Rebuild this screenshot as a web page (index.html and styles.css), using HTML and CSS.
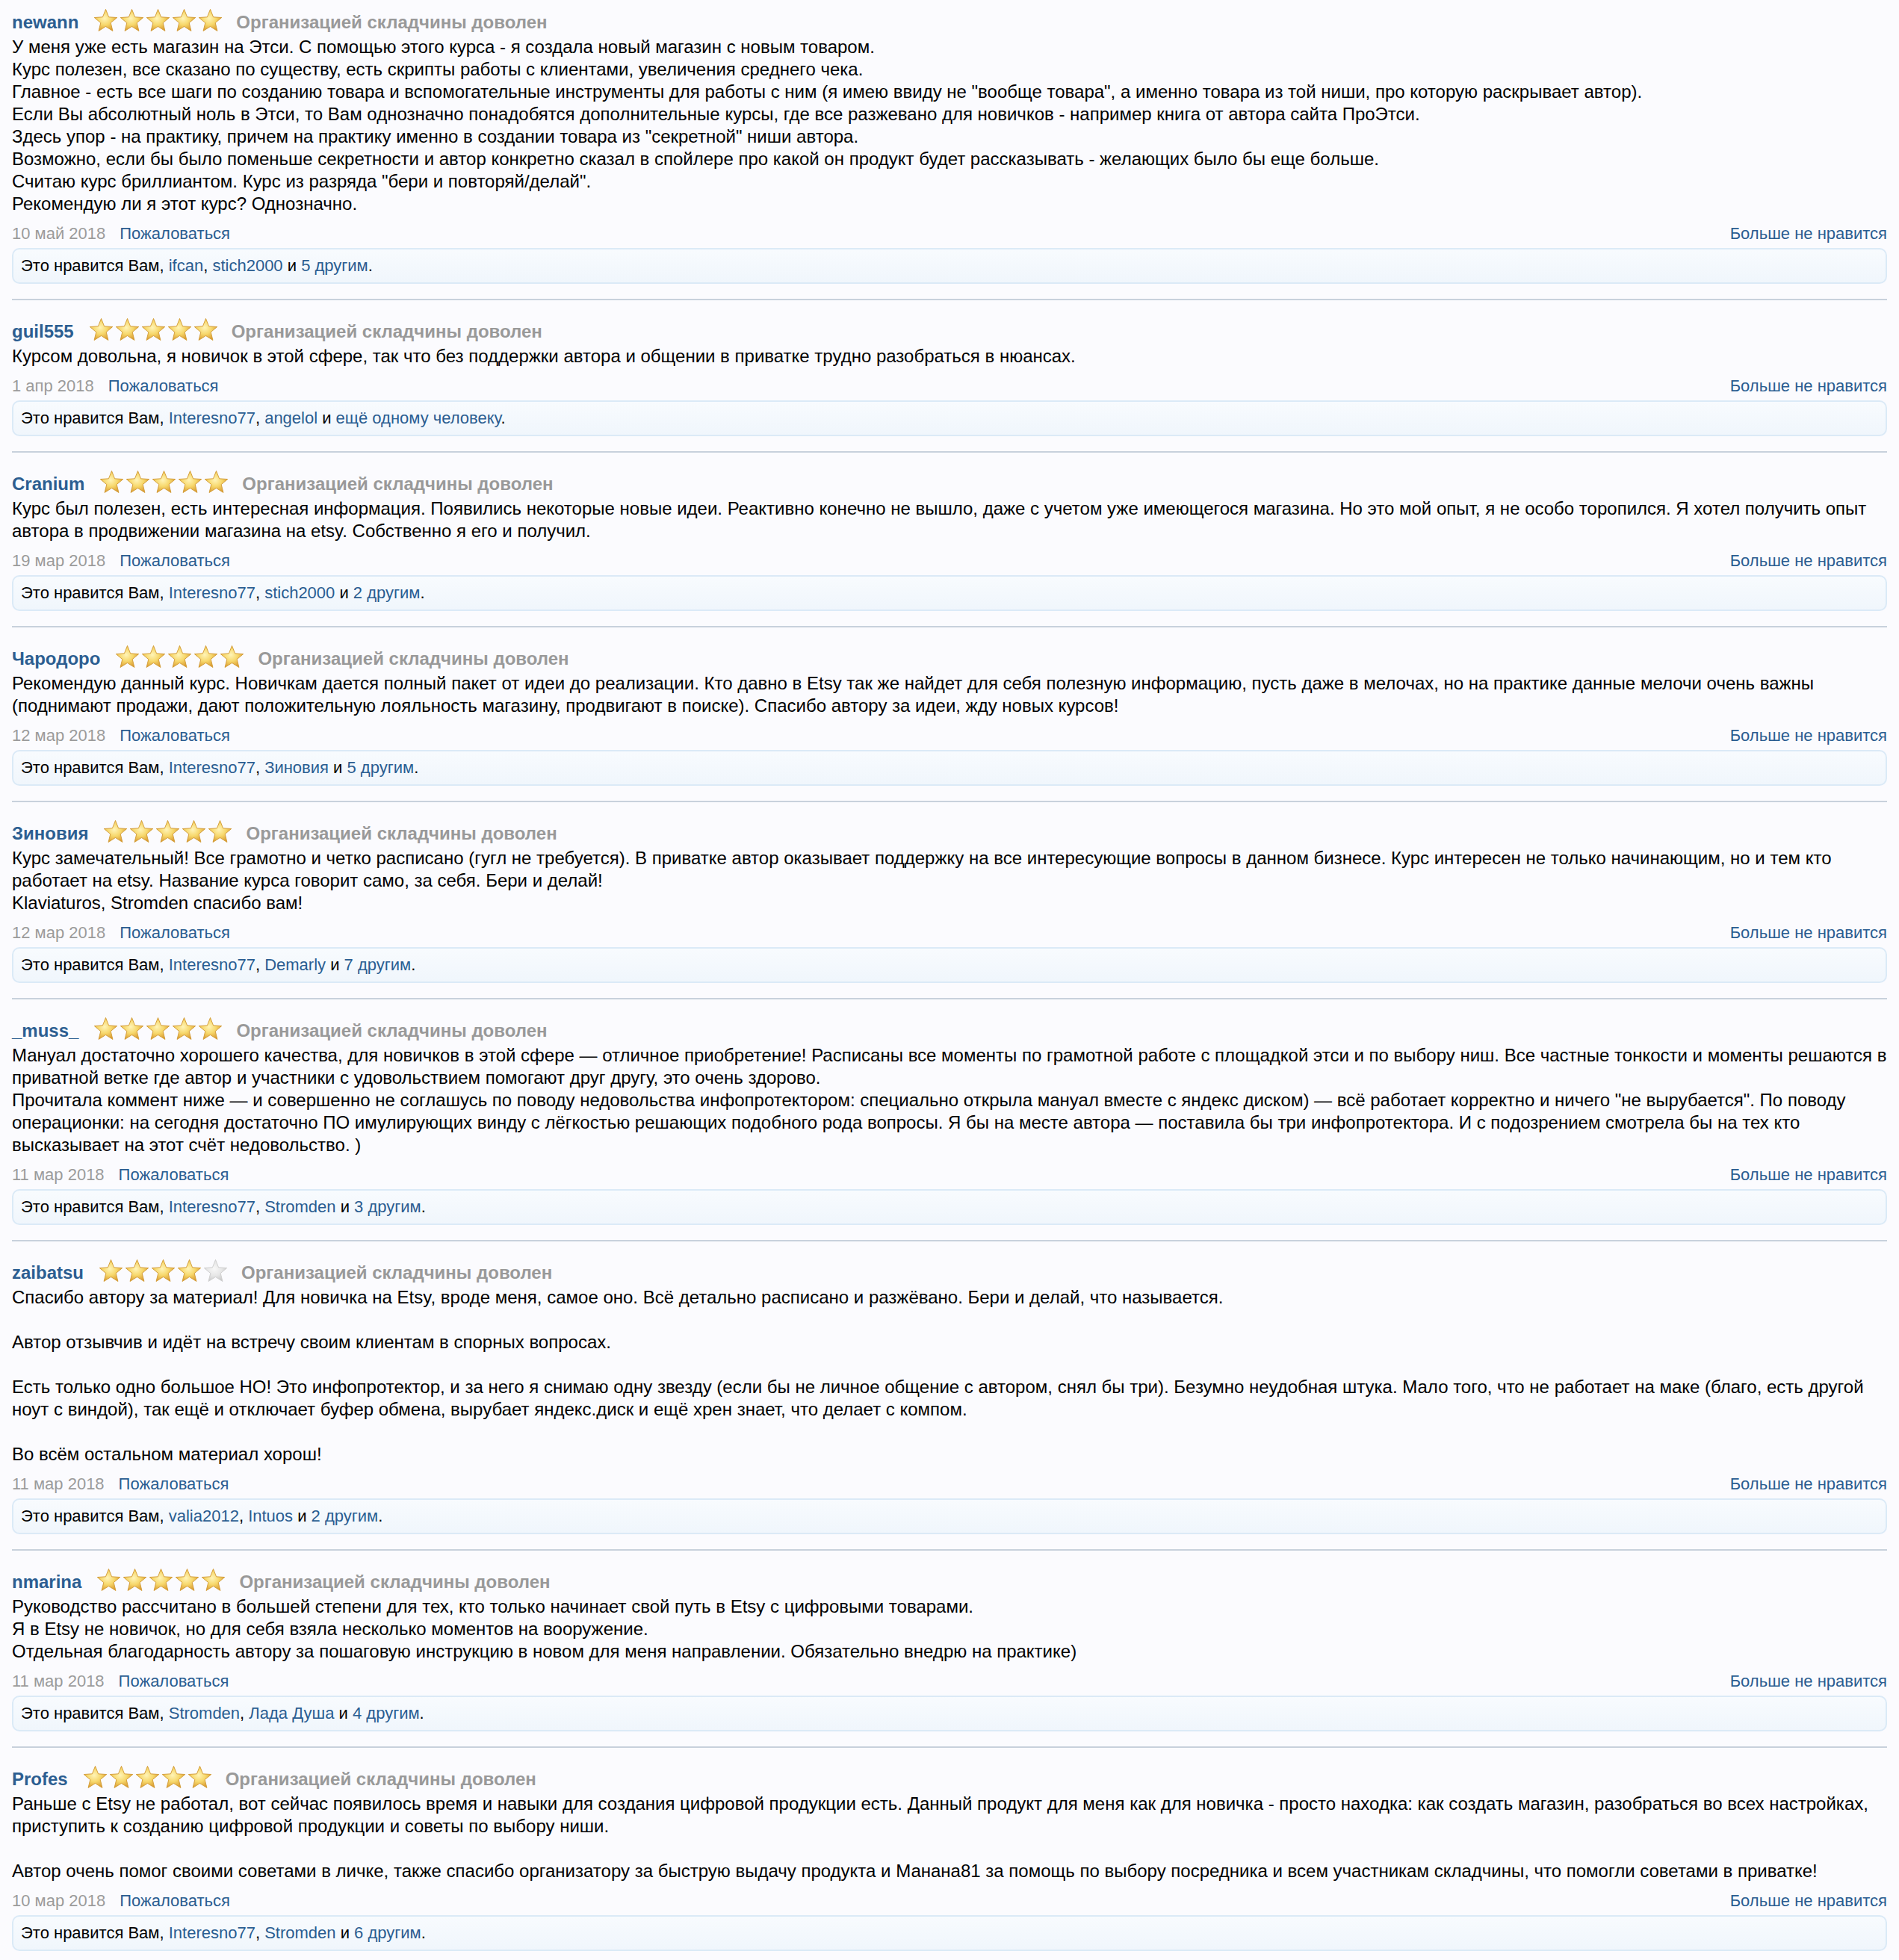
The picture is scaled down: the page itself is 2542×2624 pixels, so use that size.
FILE: index.html
```html
<!DOCTYPE html>
<html lang="ru">
<head>
    <meta charset="UTF-8">
    <meta name="viewport" content="width=device-width, initial-scale=1.0">
    <title>Отзывы</title>
    <link rel="stylesheet" href="styles.css">
</head>
<body>

<!-- Звезды рейтинга -->
<svg class="defs" width="0" height="0" aria-hidden="true">
    <defs>
        <radialGradient id="gold" cx="0.45" cy="0.42" r="0.6">
            <stop offset="0" stop-color="#fff4b8"/>
            <stop offset="0.5" stop-color="#f7d86c"/>
            <stop offset="1" stop-color="#d99a2e"/>
        </radialGradient>
        <radialGradient id="grey" cx="0.45" cy="0.42" r="0.6">
            <stop offset="0" stop-color="#f8f8f8"/>
            <stop offset="0.55" stop-color="#e6e6e6"/>
            <stop offset="1" stop-color="#c8c8c8"/>
        </radialGradient>
        <symbol id="star-on" viewBox="0 0 36 34">
            <polygon points="18,1.5 22.2,12.2 33.7,12.9 24.9,20.2 27.7,31.4 18,25.2 8.3,31.4 11.1,20.2 2.3,12.9 13.8,12.2" fill="url(#gold)" stroke="#d39c3a" stroke-width="1" stroke-linejoin="round"/>
        </symbol>
        <symbol id="star-off" viewBox="0 0 36 34">
            <polygon points="18,1.5 22.2,12.2 33.7,12.9 24.9,20.2 27.7,31.4 18,25.2 8.3,31.4 11.1,20.2 2.3,12.9 13.8,12.2" fill="url(#grey)" stroke="#cdcdcd" stroke-width="1" stroke-linejoin="round"/>
        </symbol>
    </defs>
</svg>

<div class="reviews">

    <div class="review">
        <div class="review-head">
            <a href="#" class="username">newann</a>
            <span class="stars">
                <svg><use href="#star-on"/></svg><svg><use href="#star-on"/></svg><svg><use href="#star-on"/></svg><svg><use href="#star-on"/></svg><svg><use href="#star-on"/></svg>
            </span>
            <span class="review-title">Организацией складчины доволен</span>
        </div>
        <div class="review-text">
            У меня уже есть магазин на Этси. С помощью этого курса - я создала новый магазин с новым товаром.<br>
            Курс полезен, все сказано по существу, есть скрипты работы с клиентами, увеличения среднего чека.<br>
            Главное - есть все шаги по созданию товара и вспомогательные инструменты для работы с ним (я имею ввиду не "вообще товара", а именно товара из той ниши, про которую раскрывает автор).<br>
            Если Вы абсолютный ноль в Этси, то Вам однозначно понадобятся дополнительные курсы, где все разжевано для новичков - например книга от автора сайта ПроЭтси.<br>
            Здесь упор - на практику, причем на практику именно в создании товара из "секретной" ниши автора.<br>
            Возможно, если бы было поменьше секретности и автор конкретно сказал в спойлере про какой он продукт будет рассказывать - желающих было бы еще больше.<br>
            Считаю курс бриллиантом. Курс из разряда "бери и повторяй/делай".<br>
            Рекомендую ли я этот курс? Однозначно.
        </div>
        <div class="review-meta">
            <span class="date">10 май 2018</span>
            <a href="#" class="report">Пожаловаться</a>
            <a href="#" class="unlike">Больше не нравится</a>
        </div>
        <div class="likes">Это нравится Вам, <a href="#">ifcan</a>, <a href="#">stich2000</a> и <a href="#">5 другим</a>.</div>
    </div>

    <div class="review">
        <div class="review-head">
            <a href="#" class="username">guil555</a>
            <span class="stars">
                <svg><use href="#star-on"/></svg><svg><use href="#star-on"/></svg><svg><use href="#star-on"/></svg><svg><use href="#star-on"/></svg><svg><use href="#star-on"/></svg>
            </span>
            <span class="review-title">Организацией складчины доволен</span>
        </div>
        <div class="review-text">
            Курсом довольна, я новичок в этой сфере, так что без поддержки автора и общении в приватке трудно разобраться в нюансах.
        </div>
        <div class="review-meta">
            <span class="date">1 апр 2018</span>
            <a href="#" class="report">Пожаловаться</a>
            <a href="#" class="unlike">Больше не нравится</a>
        </div>
        <div class="likes">Это нравится Вам, <a href="#">Interesno77</a>, <a href="#">angelol</a> и <a href="#">ещё одному человеку</a>.</div>
    </div>

    <div class="review">
        <div class="review-head">
            <a href="#" class="username">Cranium</a>
            <span class="stars">
                <svg><use href="#star-on"/></svg><svg><use href="#star-on"/></svg><svg><use href="#star-on"/></svg><svg><use href="#star-on"/></svg><svg><use href="#star-on"/></svg>
            </span>
            <span class="review-title">Организацией складчины доволен</span>
        </div>
        <div class="review-text">
            Курс был полезен, есть интересная информация. Появились некоторые новые идеи. Реактивно конечно не вышло, даже с учетом уже имеющегося магазина. Но это мой опыт, я не особо торопился. Я хотел получить опыт автора в продвижении магазина на etsy. Собственно я его и получил.
        </div>
        <div class="review-meta">
            <span class="date">19 мар 2018</span>
            <a href="#" class="report">Пожаловаться</a>
            <a href="#" class="unlike">Больше не нравится</a>
        </div>
        <div class="likes">Это нравится Вам, <a href="#">Interesno77</a>, <a href="#">stich2000</a> и <a href="#">2 другим</a>.</div>
    </div>

    <div class="review">
        <div class="review-head">
            <a href="#" class="username">Чародоро</a>
            <span class="stars">
                <svg><use href="#star-on"/></svg><svg><use href="#star-on"/></svg><svg><use href="#star-on"/></svg><svg><use href="#star-on"/></svg><svg><use href="#star-on"/></svg>
            </span>
            <span class="review-title">Организацией складчины доволен</span>
        </div>
        <div class="review-text">
            Рекомендую данный курс. Новичкам дается полный пакет от идеи до реализации. Кто давно в Etsy так же найдет для себя полезную информацию, пусть даже в мелочах, но на практике данные мелочи очень важны (поднимают продажи, дают положительную лояльность магазину, продвигают в поиске). Спасибо автору за идеи, жду новых курсов!
        </div>
        <div class="review-meta">
            <span class="date">12 мар 2018</span>
            <a href="#" class="report">Пожаловаться</a>
            <a href="#" class="unlike">Больше не нравится</a>
        </div>
        <div class="likes">Это нравится Вам, <a href="#">Interesno77</a>, <a href="#">Зиновия</a> и <a href="#">5 другим</a>.</div>
    </div>

    <div class="review">
        <div class="review-head">
            <a href="#" class="username">Зиновия</a>
            <span class="stars">
                <svg><use href="#star-on"/></svg><svg><use href="#star-on"/></svg><svg><use href="#star-on"/></svg><svg><use href="#star-on"/></svg><svg><use href="#star-on"/></svg>
            </span>
            <span class="review-title">Организацией складчины доволен</span>
        </div>
        <div class="review-text">
            Курс замечательный! Все грамотно и четко расписано (гугл не требуется). В приватке автор оказывает поддержку на все интересующие вопросы в данном бизнесе. Курс интересен не только начинающим, но и тем кто работает на etsy. Название курса говорит само, за себя. Бери и делай!<br>
            Klaviaturos, Stromden спасибо вам!
        </div>
        <div class="review-meta">
            <span class="date">12 мар 2018</span>
            <a href="#" class="report">Пожаловаться</a>
            <a href="#" class="unlike">Больше не нравится</a>
        </div>
        <div class="likes">Это нравится Вам, <a href="#">Interesno77</a>, <a href="#">Demarly</a> и <a href="#">7 другим</a>.</div>
    </div>

    <div class="review">
        <div class="review-head">
            <a href="#" class="username">_muss_</a>
            <span class="stars">
                <svg><use href="#star-on"/></svg><svg><use href="#star-on"/></svg><svg><use href="#star-on"/></svg><svg><use href="#star-on"/></svg><svg><use href="#star-on"/></svg>
            </span>
            <span class="review-title">Организацией складчины доволен</span>
        </div>
        <div class="review-text">
            Мануал достаточно хорошего качества, для новичков в этой сфере — отличное приобретение! Расписаны все моменты по грамотной работе с площадкой этси и по выбору ниш. Все частные тонкости и моменты решаются в приватной ветке где автор и участники с удовольствием помогают друг другу, это очень здорово.<br>
            Прочитала коммент ниже — и совершенно не соглашусь по поводу недовольства инфопротектором: специально открыла мануал вместе с яндекс диском) — всё работает корректно и ничего "не вырубается". По поводу операционки: на сегодня достаточно ПО имулирующих винду с лёгкостью решающих подобного рода вопросы. Я бы на месте автора — поставила бы три инфопротектора. И с подозрением смотрела бы на тех кто высказывает на этот счёт недовольство. )
        </div>
        <div class="review-meta">
            <span class="date">11 мар 2018</span>
            <a href="#" class="report">Пожаловаться</a>
            <a href="#" class="unlike">Больше не нравится</a>
        </div>
        <div class="likes">Это нравится Вам, <a href="#">Interesno77</a>, <a href="#">Stromden</a> и <a href="#">3 другим</a>.</div>
    </div>

    <div class="review">
        <div class="review-head">
            <a href="#" class="username">zaibatsu</a>
            <span class="stars">
                <svg><use href="#star-on"/></svg><svg><use href="#star-on"/></svg><svg><use href="#star-on"/></svg><svg><use href="#star-on"/></svg><svg><use href="#star-off"/></svg>
            </span>
            <span class="review-title">Организацией складчины доволен</span>
        </div>
        <div class="review-text">
            Спасибо автору за материал! Для новичка на Etsy, вроде меня, самое оно. Всё детально расписано и разжёвано. Бери и делай, что называется.<br>
            <br>
            Автор отзывчив и идёт на встречу своим клиентам в спорных вопросах.<br>
            <br>
            Есть только одно большое НО! Это инфопротектор, и за него я снимаю одну звезду (если бы не личное общение с автором, снял бы три). Безумно неудобная штука. Мало того, что не работает на маке (благо, есть другой ноут с виндой), так ещё и отключает буфер обмена, вырубает яндекс.диск и ещё хрен знает, что делает с компом.<br>
            <br>
            Во всём остальном материал хорош!
        </div>
        <div class="review-meta">
            <span class="date">11 мар 2018</span>
            <a href="#" class="report">Пожаловаться</a>
            <a href="#" class="unlike">Больше не нравится</a>
        </div>
        <div class="likes">Это нравится Вам, <a href="#">valia2012</a>, <a href="#">Intuos</a> и <a href="#">2 другим</a>.</div>
    </div>

    <div class="review">
        <div class="review-head">
            <a href="#" class="username">nmarina</a>
            <span class="stars">
                <svg><use href="#star-on"/></svg><svg><use href="#star-on"/></svg><svg><use href="#star-on"/></svg><svg><use href="#star-on"/></svg><svg><use href="#star-on"/></svg>
            </span>
            <span class="review-title">Организацией складчины доволен</span>
        </div>
        <div class="review-text">
            Руководство рассчитано в большей степени для тех, кто только начинает свой путь в Etsy с цифровыми товарами.<br>
            Я в Etsy не новичок, но для себя взяла несколько моментов на вооружение.<br>
            Отдельная благодарность автору за пошаговую инструкцию в новом для меня направлении. Обязательно внедрю на практике)
        </div>
        <div class="review-meta">
            <span class="date">11 мар 2018</span>
            <a href="#" class="report">Пожаловаться</a>
            <a href="#" class="unlike">Больше не нравится</a>
        </div>
        <div class="likes">Это нравится Вам, <a href="#">Stromden</a>, <a href="#">Лада Душа</a> и <a href="#">4 другим</a>.</div>
    </div>

    <div class="review">
        <div class="review-head">
            <a href="#" class="username">Profes</a>
            <span class="stars">
                <svg><use href="#star-on"/></svg><svg><use href="#star-on"/></svg><svg><use href="#star-on"/></svg><svg><use href="#star-on"/></svg><svg><use href="#star-on"/></svg>
            </span>
            <span class="review-title">Организацией складчины доволен</span>
        </div>
        <div class="review-text">
            Раньше с Etsy не работал, вот сейчас появилось время и навыки для создания цифровой продукции есть. Данный продукт для меня как для новичка - просто находка: как создать магазин, разобраться во всех настройках, приступить к созданию цифровой продукции и советы по выбору ниши.<br>
            <br>
            Автор очень помог своими советами в личке, также спасибо организатору за быструю выдачу продукта и Манана81 за помощь по выбору посредника и всем участникам складчины, что помогли советами в приватке!
        </div>
        <div class="review-meta">
            <span class="date">10 мар 2018</span>
            <a href="#" class="report">Пожаловаться</a>
            <a href="#" class="unlike">Больше не нравится</a>
        </div>
        <div class="likes">Это нравится Вам, <a href="#">Interesno77</a>, <a href="#">Stromden</a> и <a href="#">6 другим</a>.</div>
    </div>

</div>

</body>
</html>
```

FILE: styles.css
```css
body {
    font-family: "Liberation Sans", Arial, sans-serif;
    font-size: 22px;
    line-height: 30px;
    color: #000;
    background-color: #fbfbfe;
    margin: 0;
    padding: 0 16px;
}
a {
    color: #2a5d91;
    text-decoration: none;
}
.defs {
    position: absolute;
    width: 0;
    height: 0;
}
.review {
    padding: 24px 0 20px;
    border-bottom: 2px solid #c8d1dc;
}
.review:first-child {
    padding-top: 12px;
}
.review:last-child {
    border-bottom: none;
}
.review-head {
    display: flex;
    align-items: center;
    height: 36px;
    font-size: 24px;
    font-weight: bold;
}
.username {
    color: #2c5e91;
}
.stars {
    display: flex;
    margin: -6px 17px 0 19px;
}
.stars svg {
    width: 35px;
    height: 33px;
    display: block;
}
.review-title {
    color: #999;
}
.review-text {
    font-size: 24px;
}
.review-meta {
    display: flex;
    margin-top: 10px;
}
.date {
    color: #9b9b9b;
    margin-right: 19px;
}
.review-meta .unlike {
    margin-left: auto;
}
.likes {
    margin-top: 4px;
    padding: 7px 10px;
    border: 2px solid #dbeaf7;
    border-radius: 10px;
    background: linear-gradient(#f8fbfe, #f0f6fc);
}
```
